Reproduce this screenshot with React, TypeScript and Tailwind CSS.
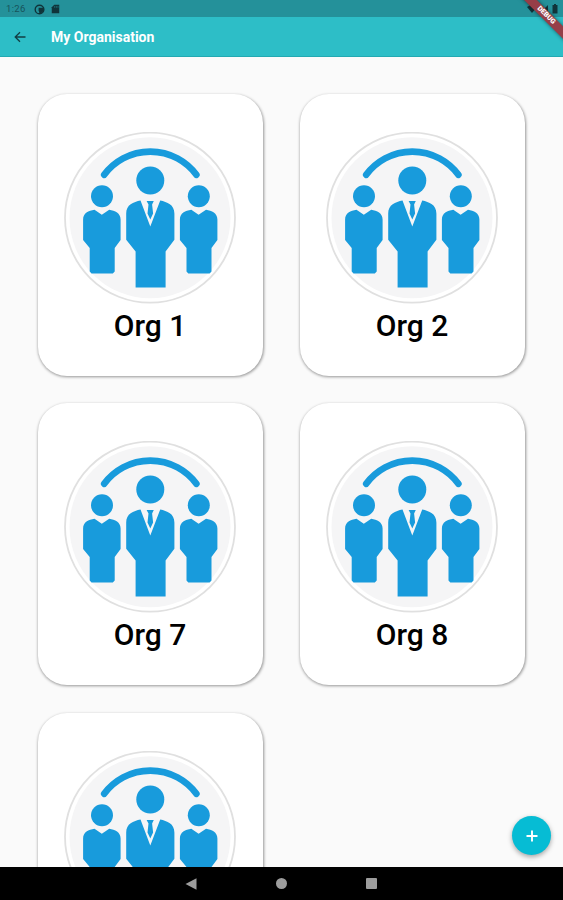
function TeamIcon() {
  return (
    <svg viewBox="64 131.5 172 172" className="size-[172px] shrink-0" fill="#189bdc">
      <circle cx="150" cy="217.2" r="85" fill="#fff" stroke="#e0e0e0" strokeWidth="1.8" />
      <circle cx="150" cy="217.2" r="80.5" fill="#f5f5f6" />
      <path d="M104.2 174.3A57.4 57.4 0 0 1 196.4 174.3" fill="none" stroke="#189bdc" strokeWidth="6.6" strokeLinecap="round" />
      <circle cx="150.3" cy="180" r="14" />
      <path d="M140.5 200L150.3 226L160.2 200C167 201.5 174.4 204 174.4 213V239.3L165.6 251V287H135.6V251L126.2 239.3V213C126.2 204 133.5 201.5 140.5 200Z" />
      <path d="M146.6 200.4H153.8L152.1 204L153.1 213L150.3 219L147.5 213L148.5 204Z" />
      <SideFigure />
      <g transform="translate(96.8 0)">
        <SideFigure />
      </g>
    </svg>
  );
}

function SideFigure() {
  return (
    <>
      <circle cx="102" cy="195.7" r="11" />
      <path d="M94.5 209.2L101.8 214.2L109.2 209.2C115 210 120.6 212.5 120.6 219V239.5L114.7 247.5V271L112.8 273H91.5L89.7 271V247.5L83.1 239.5V219C83.1 212.5 88.5 210 94.5 209.2Z" />
    </>
  );
}

function OrgCard({ name }: { name?: string }) {
  return (
    <button className="flex h-[282px] w-[225px] flex-col items-center rounded-[29px] bg-white pt-[38px] shadow-[0.5px_1px_3px_rgba(0,0,0,0.4)]">
      <TeamIcon />
      {name && <span className="mt-[4px] text-[30px] leading-[36px] font-medium text-black">{name}</span>}
    </button>
  );
}

export default function App() {
  return (
    <div className="relative flex h-[900px] w-[563px] flex-col overflow-hidden bg-[#fafafa] font-[Roboto,sans-serif]">
      <div className="flex h-[17px] shrink-0 items-center bg-[#24919a] pt-px pl-[6px] text-[#17535a]">
        <span className="w-[28px] text-[9.5px] leading-none tracking-[0.3px]">1:26</span>
        <svg viewBox="0 0 12 12" className="size-[11px]">
          <circle cx="6" cy="6" r="4.7" fill="none" stroke="#10343a" strokeWidth="1.5" />
          <path d="M5 4h6v3L8 10H6L5 7Z" fill="#10343a" />
        </svg>
        <svg viewBox="0 0 10 12" className="ml-[6px] h-[10px] w-[9px]">
          <path d="M3.5 1H9.5V11H.5V4Z" fill="#10343a" />
          <path d="M4 2.5V4.5M6 2.5V4.5M8 2.5V4.5" stroke="#24919a" strokeWidth=".7" />
        </svg>
        <svg viewBox="0 0 34 12" className="ml-auto mr-[3px] h-[12px] w-[34px]" fill="#10343a">
          <path d="M1 4Q6 0 11 4L6 10Z" />
          <path d="M22 2V10H14Z" />
          <path d="M27 2H28V1H30V2H31.5V10.5H26.5V2Z" />
        </svg>
      </div>
      <header className="flex h-[40px] shrink-0 items-center border-b border-[#23a9b2] bg-[#2dbec7] pl-[14px]">
        <svg viewBox="0 0 12 12" className="size-[12px]" fill="none" stroke="#123f44" strokeWidth="1.3">
          <path d="M11.5 6H1.4M6 1.2L1.2 6L6 10.8" />
        </svg>
        <h1 className="ml-[25px] pt-px text-[14px] leading-none font-bold text-white">My Organisation</h1>
      </header>
      <main className="grid min-h-0 flex-1 grid-cols-[225px_225px] content-start gap-x-[37px] gap-y-[27.5px] overflow-hidden pt-[36.5px] pl-[37.5px]">
        <OrgCard name="Org 1" />
        <OrgCard name="Org 2" />
        <OrgCard name="Org 7" />
        <OrgCard name="Org 8" />
        <OrgCard />
      </main>
      <nav className="flex h-[33px] shrink-0 items-center bg-black pl-[185px]">
        <svg viewBox="0 0 12 12" className="size-[12px]" fill="#9d9d9d">
          <path d="M.5 6L11.5 .3V11.7Z" />
        </svg>
        <span className="ml-[79px] size-[11px] rounded-full bg-[#9d9d9d]" />
        <span className="ml-[79px] size-[11px] rounded-[1px] bg-[#9d9d9d]" />
      </nav>
      <button className="absolute top-[816px] left-[512px] flex size-[39px] items-center justify-center rounded-full bg-[#06bcd4] shadow-[0_2px_5px_rgba(0,0,0,0.35)]">
        <svg viewBox="0 0 12 12" className="size-[12px]" stroke="#fff" strokeWidth="1.9">
          <path d="M6 .5V11.5M.5 6H11.5" />
        </svg>
      </button>
      <div className="absolute top-[11px] left-[506px] flex h-[9px] w-[80px] rotate-45 items-center justify-center bg-[#963e48] text-[7px] leading-none font-black text-white shadow-[0_0_4px_rgba(0,0,0,0.5)]">
        DEBUG
      </div>
    </div>
  );
}
